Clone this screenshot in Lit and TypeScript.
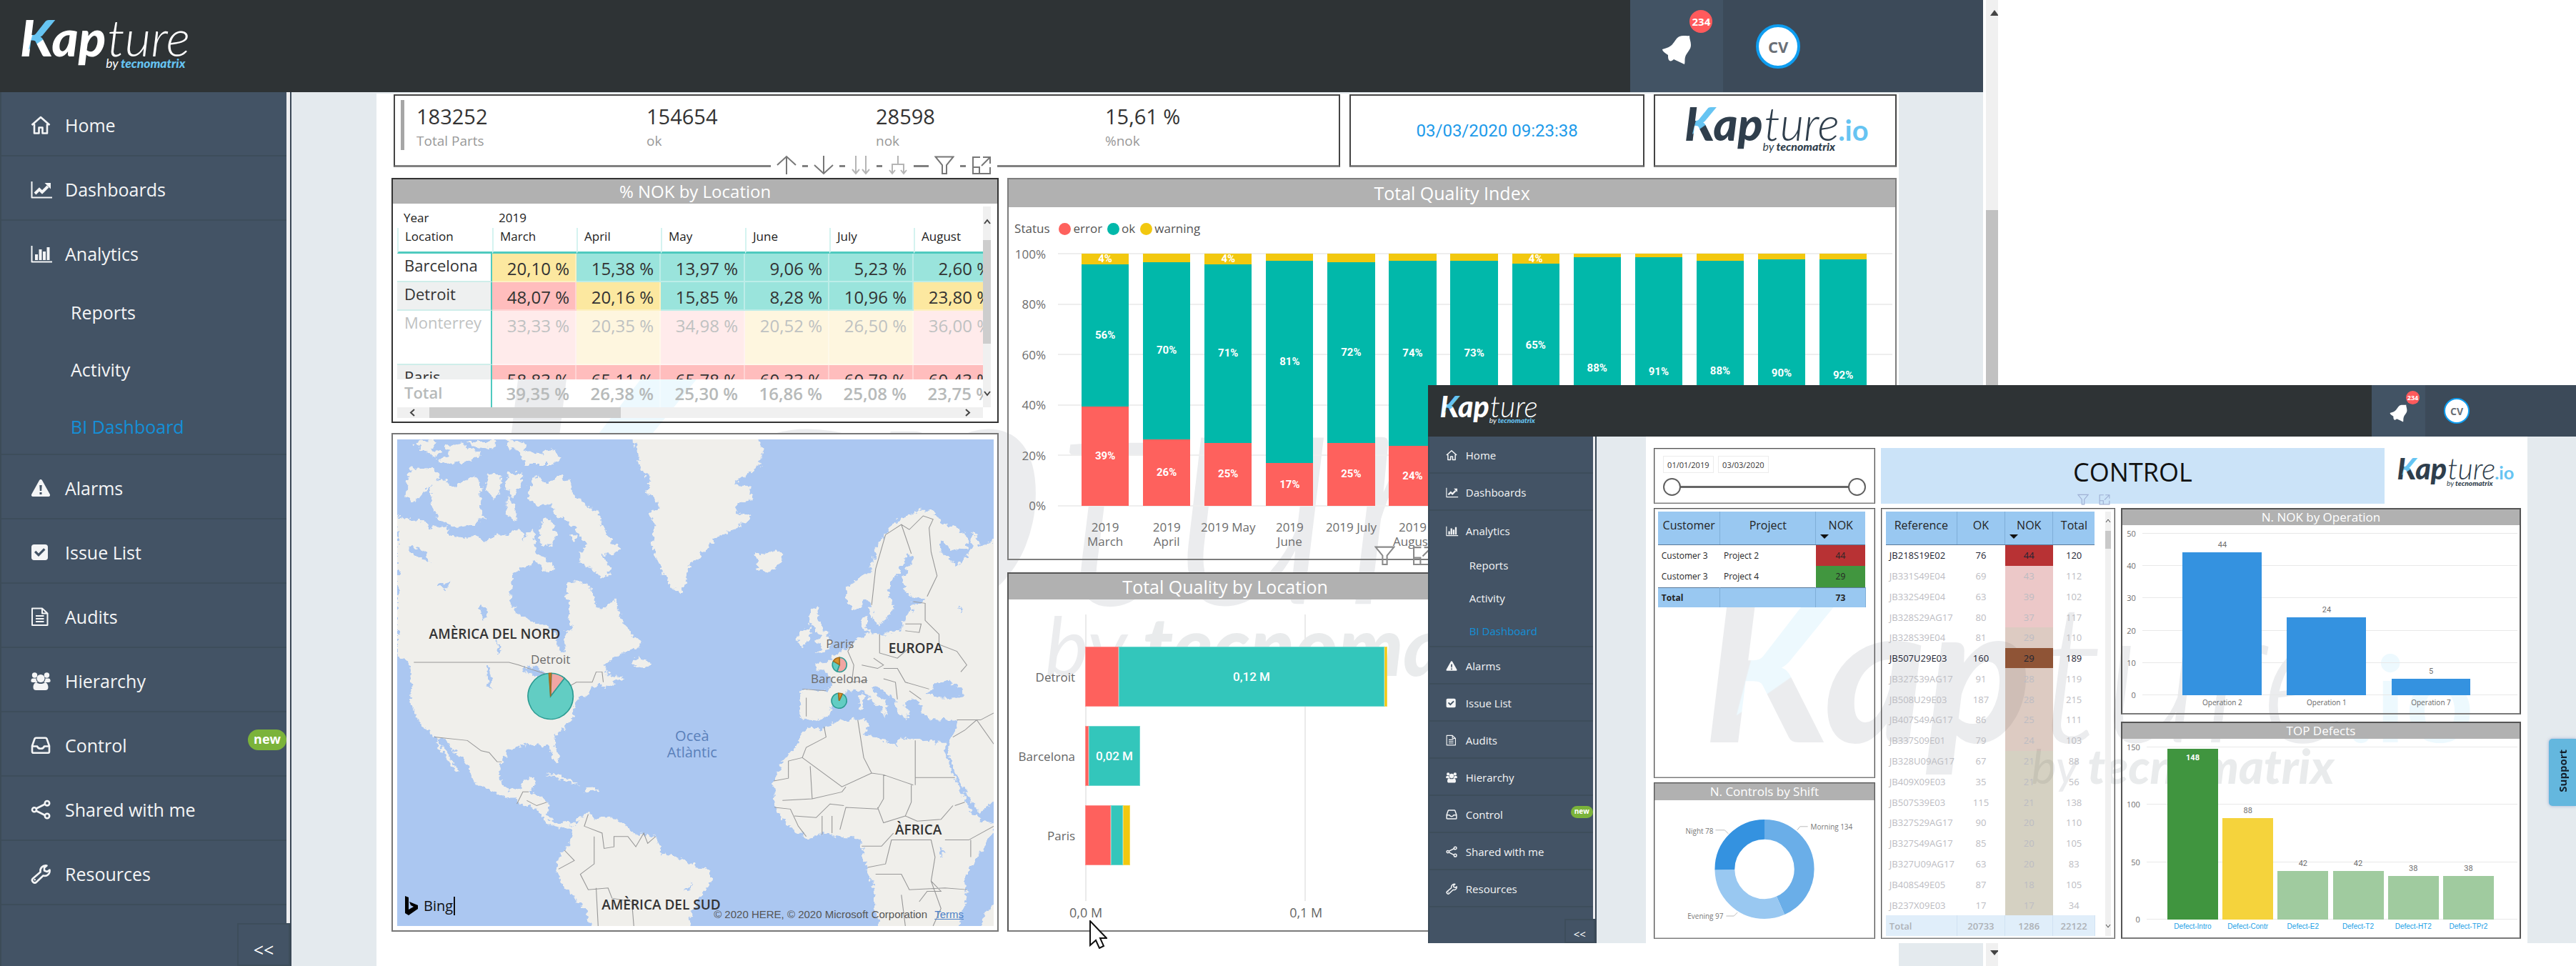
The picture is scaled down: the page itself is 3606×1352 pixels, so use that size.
import { LitElement, html, svg, css, nothing } from "lit";
import { customElement, property } from "lit/decorators.js";
import { classMap } from "lit/directives/class-map.js";

/* ---------- Shared pieces ---------- */

const panelStyles = css`
  .panel {
    display: flex;
    flex-direction: column;
    box-sizing: border-box;
    min-width: 0;
    border: 2px solid #555;
    border-bottom-color: #7a7a7a;
  }
  .title {
    margin: 0;
    background: #b1b1b1;
    color: #fff;
    font-weight: 400;
    text-align: center;
  }
`;

const funnel = svg`<path d="M1.5 2.5h25L17 14v12h-6V14z" />`;
const focus = svg`<path d="M12 3H2v23h24v-9M2 17h9v9M16 3h10v9M14 15 26 3" />`;

const icons: Record<string, unknown> = {
  home: svg`<path class="s" d="M1.5 14 14 3l12.500 11M5 12.500V25.500h6.500v-8h5v8H23V12.500" />`,
  line: svg`<path class="t" d="M1.500 3v22.500H30" /><path class="b" d="m6 20 6-6 4 4 8-8" /><path d="M19.500 5H28v8.500z" />`,
  bars: svg`<path class="t" d="M1.500 3v22.500H30" /><path d="M6 15h4v8H6zM11.500 8h4v15h-4zM17 11h4v12h-4zM22.500 5h4v18h-4z" />`,
  alarm: svg`<path fill-rule="evenodd" d="M14 2c1 0 1.600.6 2 1.300l10.800 19.500c.8 1.500-.1 3.200-1.800 3.200H3c-1.700 0-2.600-1.700-1.800-3.200L12 3.300C12.400 2.600 13 2 14 2zm-1.700 8 .5 8h2.400l.5-8zm.2 10v3h3v-3z" />`,
  check: svg`<path fill-rule="evenodd" d="M4.500 3h16c2 0 3.500 1.500 3.500 3.500v15c0 2-1.500 3.500-3.500 3.500h-16C2.500 25 1 23.500 1 21.500v-15C1 4.500 2.500 3 4.500 3zM5 14l6 6 9.500-9.500-2.300-2.300L11 15.400l-3.700-3.700z" />`,
  file: svg`<path class="t" d="M2 2.500h14l7.500 7V26H2zM16 2.500v7h7.500M7 13h11.500M7 17h11.500M7 21h11.500" />`,
  users: svg`<circle cx="14" cy="10.500" r="5.500" /><circle cx="5.500" cy="6" r="3.700" /><circle cx="22.500" cy="6" r="3.700" /><path d="M3 10.500h4.500c0 2.500 1 4.200 2.500 5.500H3c-2 0-3-1-2.600-2.800.4-2 1.300-2.700 2.600-2.700zM25 10.500h-4.500c0 2.500-1 4.200-2.500 5.500h7c2 0 3-1 2.600-2.800-.4-2-1.300-2.700-2.600-2.700zM8 16c1.500 1.500 3.500 2 6 2s4.500-.5 6-2c3 .5 4.500 3.500 4.500 7 0 2.500-1.500 4-4 4h-13c-2.500 0-4-1.500-4-4 0-3.500 1.500-6.500 4.500-7z" />`,
  inbox: svg`<path class="s" d="M2 15 5.500 5c.3-.8 1-1.300 1.800-1.300h13.400c.8 0 1.500.5 1.800 1.300L26 15v8c0 1-.7 1.700-1.700 1.700H3.700C2.700 24.700 2 24 2 23zM2 15.500h7c.8 2.300 2.500 3.300 5 3.300s4.200-1 5-3.300h7" />`,
  share: svg`<path class="s" d="M8 12.500 20 6.500M8 16l12 6" /><circle class="s" cx="5" cy="14.200" r="3" /><circle class="s" cx="23" cy="5.200" r="3.200" /><circle class="s" cx="23" cy="23" r="3.200" />`,
  wrench: svg`<path class="s" d="M13.500 11.500C12.600 6.500 16.500 1.500 22.500 2.500l-3.500 3v4l4 1.500 3.500-2.500c1 5-3.500 9.500-9 8L8 25.500c-3 3-8-1.500-5.200-4.800z" /><circle cx="5.800" cy="22.300" r="1.200" />`,
};

/* ---------- Brand logo ---------- */

@customElement("kap-logo")
export class KapLogo extends LitElement {
  @property({ type: Boolean }) io = false;

  static styles = css`
    :host {
      display: block;
      --main: #2f3e4c;
      --sky: #66c4f2;
      --tag: #2f3e4c;
    }
    :host([tone="light"]) {
      --main: #fff;
      --tag: #66c4f2;
    }
    :host([tone="ghost"]) {
      --main: #ebecee;
      --sky: #edf9fe;
      --tag: #e9ebec;
    }
    svg {
      display: block;
      width: 100%;
      height: auto;
      overflow: visible;
    }
    text {
      font-family: Lato, "Open Sans", sans-serif;
      font-style: italic;
      fill: var(--main);
    }
    .heavy {
      font-size: 65px;
      font-weight: 900;
      fill: url(#ink);
    }
    .thin {
      font-size: 65px;
      font-weight: 300;
    }
    .base {
      fill: var(--main);
    }
    .arm {
      fill: var(--sky);
    }
    .io {
      fill: var(--sky);
      font-size: 40px;
      font-weight: 700;
      font-style: normal;
    }
    .by {
      font-size: 16px;
      font-weight: 400;
    }
    .tag {
      font-size: 16px;
      font-weight: 900;
      fill: var(--tag);
    }
  `;

  render() {
    return html`<svg viewBox="0 0 ${this.io ? 254 : 214} 66" role="img" aria-label="Kapture by tecnomatrix">
      <pattern id="ink" patternUnits="userSpaceOnUse" x="-20" y="-20" width="280" height="120">
        <rect class="base" width="280" height="120" />
        <path class="arm" d="M41 16H80V28L63 32 50 44 30 58Z" />
      </pattern>
      <text class="heavy" x="-1" y="47">Kap</text>
      <text class="thin" x="111" y="47">ture</text>
      <text class="by" x="109" y="61">by</text>
      <text class="tag" x="128" y="61">tecnomatrix</text>
      ${this.io ? svg`<text class="io" x="215" y="47">.io</text>` : nothing}
    </svg>`;
  }
}

/* ---------- Application window: header, side menu, content ---------- */

const MENU = [
  { icon: "home", label: "Home" },
  { icon: "line", label: "Dashboards" },
  { icon: "bars", label: "Analytics", sub: ["Reports", "Activity", "BI Dashboard"] },
  { icon: "alarm", label: "Alarms" },
  { icon: "check", label: "Issue List" },
  { icon: "file", label: "Audits" },
  { icon: "users", label: "Hierarchy" },
  { icon: "inbox", label: "Control", badge: "new" },
  { icon: "share", label: "Shared with me" },
  { icon: "wrench", label: "Resources" },
];

@customElement("kap-window")
export class KapWindow extends LitElement {
  static styles = css`
    :host {
      display: flex;
      flex-direction: column;
      min-width: 0;
      font-family: "Open Sans", "Noto Sans", sans-serif;
      --head: 129px;
      --logo: 234px;
      --logo-x: 29px;
      --side: 408px;
      --rail: 5px;
      --row: 90px;
      --open-row: 88px;
      --sub: 80px;
      --drop: 4px;
      --font: 25px;
      --pad: 43px;
      --icon: 28px;
      --gap: 20px;
      --sub-pad: 99px;
      --foot: 60px;
      --foot-w: 74px;
      --bell: 130px;
      --bell-icon: 42px;
      --user: 364px;
      --user-pad: 46px;
      --avatar: 62px;
      --ring: 4px;
      --avatar-font: 22px;
      --count: 32px;
      --count-font: 15px;
      --new-w: 54px;
      --new-h: 29px;
      --new-font: 18px;
    }
    :host([compact]) {
      --head: 72px;
      --logo: 135px;
      --logo-x: 17px;
      --side: 236px;
      --rail: 3px;
      --row: 52px;
      --open-row: 53px;
      --sub: 46px;
      --drop: 2px;
      --font: 15px;
      --pad: 25px;
      --icon: 16px;
      --gap: 12px;
      --sub-pad: 58px;
      --foot: 34px;
      --foot-w: 43px;
      --bell: 75px;
      --bell-icon: 25px;
      --user: 211px;
      --user-pad: 26px;
      --avatar: 36px;
      --ring: 2px;
      --avatar-font: 14px;
      --count: 19px;
      --count-font: 9px;
      --new-w: 31px;
      --new-h: 17px;
      --new-font: 10px;
    }
    header {
      display: flex;
      height: var(--head);
      background: #2e3335;
    }
    .brand {
      flex: 1;
      display: flex;
      align-items: center;
      padding-left: var(--logo-x);
    }
    .brand kap-logo {
      width: var(--logo);
    }
    button {
      border: 0;
      padding: 0;
      font: inherit;
      cursor: pointer;
    }
    .bell {
      position: relative;
      width: var(--bell);
      background: #425364;
    }
    .bell svg {
      display: block;
      width: var(--bell-icon);
      margin: 8% auto 0;
      fill: #fff;
    }
    .count {
      position: absolute;
      left: 64%;
      top: 11%;
      width: var(--count);
      height: var(--count);
      line-height: var(--count);
      border-radius: 50%;
      background: #ff5a5c;
      color: #fff;
      font-size: var(--count-font);
      font-weight: 700;
      text-align: center;
    }
    .user {
      display: flex;
      align-items: center;
      box-sizing: border-box;
      width: var(--user);
      padding-left: var(--user-pad);
      background: #3c4a59;
    }
    .avatar {
      display: grid;
      place-items: center;
      box-sizing: border-box;
      width: var(--avatar);
      height: var(--avatar);
      border: var(--ring) solid #0e9df0;
      border-radius: 50%;
      background: #fff;
      color: #6a6f76;
      font-size: var(--avatar-font);
      font-weight: 700;
    }
    .body {
      flex: 1;
      display: flex;
      min-height: 0;
    }
    aside {
      display: flex;
      flex-direction: column;
      box-sizing: border-box;
      width: var(--side);
      flex: none;
      background: #435365;
      border-left: 2px solid #3c4b58;
      border-right: 2px solid #3a4856;
    }
    nav {
      flex: 1;
      border-right: var(--rail) solid #eeeef0;
    }
    ul {
      list-style: none;
      margin: 0;
      padding: 0;
    }
    .item {
      box-sizing: border-box;
      border-bottom: 2px solid #3d4d5b;
    }
    .link {
      display: flex;
      align-items: center;
      box-sizing: border-box;
      height: calc(var(--row) - 2px);
      padding: var(--drop) 0 0 calc(var(--pad) - 2px);
      gap: var(--gap);
      color: #f4f5f6;
      font-size: var(--font);
      text-decoration: none;
      white-space: nowrap;
    }
    .open > .link {
      height: var(--open-row);
    }
    .sub {
      margin-bottom: -2px;
    }
    .sub .link {
      height: var(--sub);
      padding-left: calc(var(--sub-pad) - 2px);
      padding-top: 0;
    }
    .sub .current {
      color: #1490d8;
    }
    .link svg {
      width: var(--icon);
      height: var(--icon);
      flex: none;
      overflow: visible;
      fill: #f4f5f6;
    }
    .s,
    .t,
    .b {
      fill: none;
      stroke: #f4f5f6;
      stroke-width: 2.600px;
      stroke-linejoin: round;
    }
    .t {
      stroke-width: 2px;
    }
    .b {
      stroke-width: 4px;
      stroke-linejoin: miter;
    }
    .new {
      align-self: flex-start;
      margin: calc(var(--new-h) * 0.7) 0 0 auto;
      width: var(--new-w);
      height: var(--new-h);
      line-height: calc(var(--new-h) - 2px);
      border-radius: 15px;
      background: #7bb33a;
      color: #fff;
      font-size: var(--new-font);
      font-weight: 700;
      text-align: center;
    }
    .collapse {
      align-self: flex-end;
      box-sizing: border-box;
      width: var(--foot-w);
      height: var(--foot);
      padding-top: calc(var(--foot) / 4);
      border: 2px solid #3d4d5b;
      background: #435365;
      color: #fff;
      font-size: var(--font);
      line-height: 1;
    }
    main {
      flex: 1;
      min-width: 0;
      display: flex;
      background: #e4eaee;
    }
  `;

  render() {
    return html`
      <header>
        <div class="brand"><kap-logo tone="light"></kap-logo></div>
        <button class="bell" aria-label="Notifications">
          <svg viewBox="0 0 42 42"><path d="M39 1c-4 1-9-1-14 1-5 2-7 9-12 13-4 3-9 4-12 5 0 3 4 5 8 8 0 4 0 6 2 8 2 1 4 0 6-2 5 2 10 5 15 7 1-3 0-7 1-10 2-7 8-10 8-17 0-5-2-8-2-13z" /></svg>
          <span class="count">234</span>
        </button>
        <div class="user"><button class="avatar">CV</button></div>
      </header>
      <div class="body">
        <aside>
          <nav>
            <ul>
              ${MENU.map(
                (m) => html`<li class=${classMap({ item: true, open: !!m.sub })}>
                  <a class="link" href="#">
                    <svg viewBox="0 0 28 28" aria-hidden="true">${icons[m.icon]}</svg>${m.label}
                    ${m.badge ? html`<span class="new">${m.badge}</span>` : nothing}
                  </a>
                  ${m.sub
                    ? html`<ul class="sub">
                        ${m.sub.map(
                          (s, i) => html`<li><a class=${classMap({ link: true, current: i === 2 })} href="#">${s}</a></li>`,
                        )}
                      </ul>`
                    : nothing}
                </li>`,
              )}
            </ul>
          </nav>
          <button class="collapse" aria-label="Collapse menu">&lt;&lt;</button>
        </aside>
        <main><slot></slot></main>
      </div>
    `;
  }
}

/* ---------- % NOK by Location ---------- */

const MONTHS = ["March", "April", "May", "June", "July", "August"];
type Tone = "r" | "y" | "g";
const LOCATIONS: { name: string; cls: string; tones: Tone[]; vals: string[] }[] = [
  { name: "Barcelona", cls: "", tones: ["y", "g", "g", "g", "g", "g"], vals: ["20,10 %", "15,38 %", "13,97 %", "9,06 %", "5,23 %", "2,60 %"] },
  { name: "Detroit", cls: "alt", tones: ["r", "y", "g", "g", "g", "y"], vals: ["48,07 %", "20,16 %", "15,85 %", "8,28 %", "10,96 %", "23,80 %"] },
  { name: "Monterrey", cls: "faded tall", tones: ["r", "y", "r", "y", "y", "r"], vals: ["33,33 %", "20,35 %", "34,98 %", "20,52 %", "26,50 %", "36,00 %"] },
  { name: "Paris", cls: "alt cut", tones: ["r", "r", "r", "r", "r", "r"], vals: ["58,83 %", "65,11 %", "65,78 %", "60,33 %", "60,78 %", "60,43 %"] },
];
const TOTALS = ["39,35 %", "26,38 %", "25,30 %", "16,86 %", "25,08 %", "23,75 %"];

@customElement("location-table")
export class LocationTable extends LitElement {
  static styles = [
    panelStyles,
    css`
      :host {
        display: block;
      }
      .panel {
        height: 343px;
        border-color: #333;
      }
      .title {
        height: 34px;
        font-size: 24px;
        line-height: 34px;
      }
      .area {
        display: grid;
        grid-template-columns: minmax(0, 1fr) 11px;
        padding: 4px 9px 0 6px;
      }
      .clip {
        overflow: hidden;
      }
      table {
        table-layout: fixed;
        width: 841px;
        border-collapse: separate;
        border-spacing: 0;
        color: #333;
      }
      .first {
        width: 133px;
      }
      th,
      td {
        box-sizing: border-box;
        padding: 0;
        font-weight: 400;
      }
      thead th {
        font-size: 17px;
        text-align: left;
        padding-left: 9px;
        height: 30px;
        color: #222;
      }
      thead .months th {
        height: 36px;
        padding-bottom: 10px;
        border-left: 2px solid #d4f3f0;
        border-bottom: 3px solid #4fcabf;
      }
      tbody th {
        text-align: left;
        vertical-align: top;
        padding: 1px 0 0 10px;
        font-size: 22px;
        line-height: 30px;
        border-right: 2px solid #4fcabf;
        border-bottom: 2px solid #cfeeea;
      }
      tbody td {
        height: 40px;
        text-align: right;
        vertical-align: top;
        padding: 5px 8px 0 0;
        font-size: 24px;
        line-height: 32px;
        border-right: 2px solid rgba(255, 255, 255, 0.35);
        border-bottom: 2px solid rgba(255, 255, 255, 0.35);
      }
      .alt th {
        background: #eef0f0;
      }
      .g {
        background: #9ae4dc;
      }
      .y {
        background: #fce8a0;
      }
      .r {
        background: #ffbdbd;
      }
      .tall td {
        height: 76px;
      }
      .faded {
        color: #bfc2c2;
      }
      .faded .y {
        background: #fef6df;
      }
      .faded .r {
        background: #ffebeb;
      }
      .cut th,
      .cut td {
        height: 20px;
        border-bottom: 0;
      }
      .snip {
        height: 15px;
        overflow: hidden;
      }
      .cut th .snip {
        height: 18px;
      }
      .total th,
      .total td {
        height: 39px;
        color: #b7baba;
        border-bottom: 0;
        line-height: 34px;
      }
      .total td {
        font-weight: 600;
        padding-top: 3px;
      }
      .total th {
        font-weight: 600;
      }
      .vbar,
      .hbar {
        display: flex;
        background: #f0f0f0;
      }
      .vbar {
        flex-direction: column;
        align-items: center;
      }
      svg {
        width: 11px;
        height: 11px;
        fill: none;
        stroke: #444;
        stroke-width: 2px;
        flex: none;
      }
      .vbar svg {
        margin: 16px 0 20px;
      }
      .vthumb {
        width: 11px;
        flex: 1;
        background: #cdcdcd;
      }
      .vbar .down {
        margin: 64px 0 14px;
      }
      .hbar {
        align-items: center;
        justify-content: space-between;
        height: 15px;
        padding: 0 16px;
      }
      .hthumb {
        width: 34%;
        height: 15px;
        margin-right: auto;
        margin-left: 18px;
        background: #cdcdcd;
      }
    `,
  ];

  render() {
    return html`<section class="panel">
      <h2 class="title">% NOK by Location</h2>
      <div class="area">
        <div class="clip">
          <table>
            <colgroup>
              <col class="first" />
              ${MONTHS.map(() => html`<col />`)}
            </colgroup>
            <thead>
              <tr>
                <th>Year</th>
                <th colspan="6">2019</th>
              </tr>
              <tr class="months">
                <th>Location</th>
                ${MONTHS.map((m) => html`<th>${m}</th>`)}
              </tr>
            </thead>
            <tbody>
              ${LOCATIONS.map((l) => {
                const cell = classMap({ snip: l.cls.includes("cut") });
                return html`<tr class=${l.cls}>
                  <th><div class=${cell}>${l.name}</div></th>
                  ${l.vals.map((v, i) => html`<td class=${l.tones[i]}><div class=${cell}>${v}</div></td>`)}
                </tr>`;
              })}
              <tr class="total">
                <th>Total</th>
                ${TOTALS.map((v) => html`<td>${v}</td>`)}
              </tr>
            </tbody>
          </table>
        </div>
        <div class="vbar">
          <svg viewBox="0 0 11 11"><path d="m2 8 4-5 4 5" /></svg>
          <div class="vthumb"></div>
          <svg class="down" viewBox="0 0 11 11"><path d="m2 3 4 5 4-5" /></svg>
        </div>
        <div class="hbar">
          <svg viewBox="0 0 11 11"><path d="M8 1 3 5.500 8 10" /></svg>
          <div class="hthumb"></div>
          <svg viewBox="0 0 11 11"><path d="m3 1 5 4.500L3 10" /></svg>
        </div>
      </div>
    </section>`;
  }
}

/* ---------- Total Quality Index ---------- */

const QUALITY: { cat: string[]; err: number; ok: number; warn: number; okT: string; errT: string; warnT?: string }[] = [
  { cat: ["2019", "March"], err: 39.3, ok: 56.5, warn: 4.2, errT: "39%", okT: "56%", warnT: "4%" },
  { cat: ["2019", "April"], err: 26.3, ok: 70.4, warn: 3.3, errT: "26%", okT: "70%" },
  { cat: ["2019 May"], err: 25, ok: 70.8, warn: 4.2, errT: "25%", okT: "71%", warnT: "4%" },
  { cat: ["2019", "June"], err: 17, ok: 80.2, warn: 2.8, errT: "17%", okT: "81%" },
  { cat: ["2019 July"], err: 25, ok: 71.7, warn: 3.3, errT: "25%", okT: "72%" },
  { cat: ["2019", "August"], err: 23.7, ok: 73.5, warn: 2.8, errT: "24%", okT: "74%" },
  { cat: [], err: 24, ok: 73.1, warn: 2.9, errT: "", okT: "73%" },
  { cat: [], err: 31, ok: 65, warn: 4, errT: "", okT: "65%", warnT: "4%" },
  { cat: [], err: 10.5, ok: 88, warn: 1.5, errT: "", okT: "88%" },
  { cat: [], err: 7.5, ok: 91, warn: 1.5, errT: "", okT: "91%" },
  { cat: [], err: 9.3, ok: 88, warn: 2.7, errT: "", okT: "88%" },
  { cat: [], err: 7.6, ok: 90, warn: 2.4, errT: "", okT: "90%" },
  { cat: [], err: 5.8, ok: 92, warn: 2.2, errT: "", okT: "92%" },
];

@customElement("quality-index")
export class QualityIndex extends LitElement {
  static styles = [
    panelStyles,
    css`
      :host {
        display: block;
      }
      .panel {
        position: relative;
        height: 535px;
        border-color: #7d7d7d;
        color: #6d6d6d;
        font-size: 17px;
      }
      .title {
        font-size: 25px;
        line-height: 39px;
      }
      .legend {
        display: flex;
        align-items: center;
        gap: 7px;
        margin: 18px 0 0 8px;
        line-height: 24px;
        color: #555;
      }
      .key {
        display: flex;
        align-items: center;
        gap: 3px;
      }
      .key:first-of-type {
        margin-left: 6px;
      }
      .dot {
        width: 17px;
        height: 17px;
        border-radius: 50%;
      }
      .err {
        background: #fe615d;
      }
      .ok {
        background: #01b8aa;
      }
      .warn {
        background: #f2c80f;
      }
      .plot {
        display: grid;
        height: 353px;
        margin: 23px 4px 0 4px;
      }
      .scale,
      .bars {
        grid-area: 1 / 1;
      }
      .scale {
        display: flex;
        flex-direction: column;
        justify-content: space-between;
      }
      .tick {
        display: flex;
        align-items: center;
        gap: 17px;
        height: 0;
      }
      .tick span {
        width: 48px;
        text-align: right;
      }
      .tick i {
        flex: 1;
        height: 2px;
        background: #eee;
      }
      .bars,
      .cats {
        display: grid;
        grid-template-columns: repeat(13, minmax(0, 1fr));
        padding: 0 26px 0 88px;
      }
      .bars {
        min-height: 0;
      }
      .bar {
        display: flex;
        flex-direction: column;
        width: 77%;
        margin: 0 auto;
        height: 353px;
      }
      .seg {
        display: grid;
        place-items: center;
        min-height: 0;
        overflow: hidden;
        color: #fff;
        font-family: Roboto, sans-serif;
        font-size: 15px;
        font-weight: 700;
        line-height: 15px;
      }
      .cats {
        margin: 20px 4px 0;
        text-align: center;
        line-height: 20px;
      }
      .cats div {
        display: flex;
        flex-direction: column;
        align-items: center;
        white-space: nowrap;
      }
      .tools {
        position: absolute;
        left: 512px;
        bottom: -10px;
        display: flex;
        gap: 24px;
      }
      .tools svg {
        width: 29px;
        height: 29px;
        fill: none;
        stroke: #8a8a8a;
        stroke-width: 2px;
      }
    `,
  ];

  render() {
    return html`<section class="panel">
      <h2 class="title">Total Quality Index</h2>
      <div class="legend">
        Status
        <span class="key"><i class="dot err"></i>error</span>
        <span class="key"><i class="dot ok"></i>ok</span>
        <span class="key"><i class="dot warn"></i>warning</span>
      </div>
      <div class="plot">
        <div class="scale">
          ${[100, 80, 60, 40, 20, 0].map((t) => html`<div class="tick"><span>${t}%</span><i></i></div>`)}
        </div>
        <div class="bars">
          ${QUALITY.map(
            (q) => html`<div class="bar">
              <div class="seg warn" style="flex:${q.warn}">${q.warnT ?? nothing}</div>
              <div class="seg ok" style="flex:${q.ok}">${q.okT}</div>
              <div class="seg err" style="flex:${q.err}">${q.errT}</div>
            </div>`,
          )}
        </div>
      </div>
      <div class="cats">${QUALITY.map((q) => html`<div>${q.cat.map((c) => html`<span>${c}</span>`)}</div>`)}</div>
      <div class="tools">
        <svg viewBox="0 0 28 28">${funnel}</svg>
        <svg viewBox="0 0 28 28">${focus}</svg>
      </div>
    </section>`;
  }
}

/* ---------- Total Quality by Location ---------- */

@customElement("quality-location")
export class QualityLocation extends LitElement {
  static styles = [
    panelStyles,
    css`
      :host {
        display: block;
      }
      .panel {
        height: 503px;
        color: #666;
        font-size: 17px;
      }
      .title {
        font-size: 25px;
        line-height: 36px;
      }
      .plot {
        display: grid;
        grid-template-columns: 94px 307px 1fr;
        height: 401px;
        margin-top: 21px;
      }
      .lines {
        grid-area: 1 / 2 / 2 / 3;
        border-left: 2px solid #eaeaea;
        border-right: 2px solid #eaeaea;
        margin-left: 13px;
        margin-right: -15px;
      }
      .rows {
        grid-area: 1 / 1 / 2 / 4;
        display: flex;
        flex-direction: column;
        gap: 27px;
        padding-top: 45px;
      }
      .row {
        display: flex;
        align-items: center;
        height: 84px;
      }
      .name {
        width: 93px;
        margin-right: 14px;
        text-align: right;
      }
      .seg {
        display: grid;
        place-items: center;
        height: 100%;
        box-sizing: border-box;
        border: 1px solid rgba(255, 255, 255, 0.3);
        color: #fff;
        font-family: Roboto, sans-serif;
        font-weight: 500;
      }
      .err {
        background: #fe615d;
      }
      .ok {
        background: #33c6bb;
      }
      .warn {
        background: #f2c80f;
      }
      .axis {
        display: flex;
        gap: 262px;
        padding: 6px 0 0 85px;
        line-height: 20px;
        font-size: 18px;
      }
    `,
  ];

  render() {
    const rows: [string, number, number, number, string][] = [
      ["Detroit", 47, 372, 4, "0,12 M"],
      ["Barcelona", 5, 72, 0, "0,02 M"],
      ["Paris", 36, 17, 10, ""],
    ];
    return html`<section class="panel">
      <h2 class="title">Total Quality by Location</h2>
      <div class="plot">
        <div class="lines"></div>
        <div class="rows">
          ${rows.map(
            ([name, e, o, w, t]) => html`<div class="row">
              <span class="name">${name}</span>
              <div class="seg err" style="width:${e}px"></div>
              <div class="seg ok" style="width:${o}px">${t}</div>
              ${w ? html`<div class="seg warn" style="width:${w}px"></div>` : nothing}
            </div>`,
          )}
        </div>
      </div>
      <div class="axis"><span>0,0 M</span><span>0,1 M</span></div>
    </section>`;
  }
}

/* ---------- Map ---------- */

const LAND = [
  "M28 255 60 265 100 272 110 290 150 285 160 310 200 320 230 312 250 330 280 310 310 310 330 290 350 310 345 330 370 290 375 335 378 360 400 375 425 410 410 420 390 400 370 385 355 405 340 410 320 430 315 470 312 505 330 540 370 560 410 580 430 600 435 640 445 655 455 640 450 600 470 580 460 545 465 520 455 490 455 450 480 445 510 460 525 490 530 520 545 530 560 515 575 500 590 540 600 570 620 600 642 620 640 640 610 650 570 670 550 690 555 705 560 720 600 725 570 745 550 755 540 745 515 765 500 780 480 790 470 830 470 850 450 870 425 900 428 930 438 965 432 982 420 960 410 930 390 920 350 925 310 935 295 965 285 1000 290 1040 310 1055 340 1045 350 1025 380 1022 370 1050 365 1065 400 1080 412 1095 405 1130 420 1150 450 1145 465 1150 470 1165 450 1165 420 1160 395 1140 380 1110 340 1095 330 1075 300 1075 250 1050 220 1030 205 980 170 940 150 910 122 900 80 850 60 790 65 720 60 690 28 655Z",
  "M125 900 150 940 185 1000 178 1003 150 960 130 920Z",
  "M465 1160 500 1125 515 1122 520 1140 570 1135 600 1150 625 1180 680 1190 700 1240 760 1265 815 1290 820 1320 790 1370 770 1420 760 1460 520 1460 500 1400 450 1340 430 1290 440 1240 465 1210 470 1180Z",
  "M530 20 620 20 635 70 640 110 665 150 655 190 680 200 690 230 660 245 680 280 670 340 690 400 710 450 740 485 755 450 765 400 800 360 830 320 900 280 925 255 885 245 880 225 925 205 920 170 880 160 900 140 940 110 950 60 940 20Z",
  "M365 145 385 140 400 160 420 150 440 135 460 150 470 190 500 220 540 250 545 290 570 330 592 350 570 370 545 365 560 400 565 425 545 440 520 410 490 390 490 360 510 350 490 310 460 270 430 255 410 220 385 230 360 200Z",
  "M110 160 140 145 170 170 200 150 225 140 240 170 235 220 250 260 220 280 180 290 150 280 125 250 115 210Z",
  "M60 118 120 115 135 140 100 180 75 215 50 200Z M70 38 125 36 115 60 140 70 120 85 90 60Z M150 50 190 45 240 75 215 95 180 100 150 105 130 90 160 80Z M200 36 280 36 270 60 230 55Z M300 32 340 36 350 60 380 75 425 60 440 85 420 105 350 105 330 60 310 60Z M260 130 290 135 290 175 275 210 250 170Z M310 130 345 130 340 165 320 200 300 170Z M305 200 320 215 330 270 305 250Z",
  "M395 260 420 270 430 310 415 345 395 340 385 300Z M465 310 480 305 478 330 465 325Z M395 380 425 410 400 420 390 400Z",
  "M622 690 635 660 645 675 668 683 660 698 640 692Z M405 1010 440 1010 490 1042 470 1038 430 1018Z M500 1048 530 1045 535 1055 505 1058Z",
  "M925 360 945 370 985 355 1003 375 985 405 960 420 935 410 940 385Z",
  "M1070 530 1095 515 1088 545 1105 590 1125 620 1120 645 1085 655 1100 640 1085 620 1095 600 1075 580 1065 550Z M1048 590 1070 580 1068 620 1045 640 1038 610Z",
  "M1045 765 1060 760 1110 765 1122 750 1115 715 1085 700 1085 685 1120 680 1125 665 1150 650 1180 620 1200 605 1215 595 1198 570 1200 550 1215 545 1212 580 1225 600 1260 600 1300 585 1310 550 1330 530 1325 515 1355 505 1360 495 1330 490 1310 480 1305 440 1320 400 1330 380 1320 365 1305 380 1300 405 1280 440 1265 480 1275 500 1280 530 1260 560 1240 575 1225 550 1222 515 1210 500 1195 530 1175 525 1165 500 1162 465 1190 440 1225 410 1235 350 1270 290 1300 260 1340 240 1380 240 1400 275 1440 290 1470 320 1465 350 1430 355 1400 325 1395 350 1420 380 1440 400 1475 360 1480 300 1500 345 1540 320 1540 1080 1500 1125 1470 1080 1440 1010 1418 945 1425 900 1440 850 1370 850 1350 830 1350 800 1330 790 1310 795 1305 810 1320 830 1310 852 1295 830 1285 800 1270 780 1250 760 1235 750 1225 755 1240 780 1270 805 1262 815 1258 845 1250 815 1225 795 1205 765 1185 760 1160 770 1145 780 1140 790 1125 810 1115 840 1085 852 1065 850 1045 845Z",
  "M1065 870 1095 880 1140 850 1190 848 1212 850 1215 880 1205 890 1240 905 1290 925 1300 900 1330 905 1390 915 1412 915 1408 940 1425 1000 1450 1050 1470 1110 1500 1145 1540 1155 1520 1200 1480 1270 1460 1310 1465 1370 1440 1460 1245 1460 1235 1400 1230 1330 1210 1270 1200 1230 1195 1195 1150 1195 1110 1180 1060 1195 1010 1155 980 1110 978 1030 1000 970 1040 920 1050 890Z",
  "M1540 1385 1510 1410 1500 1460 1540 1460Z M1195 780 1205 775 1205 815 1195 820Z",
];
const LAKES =
  "M345 700 380 695 410 715 395 725 360 715ZM400 725 415 760 405 775 398 750ZM255 690 268 700 265 755 258 750ZM50 345 95 350 110 385 80 380ZM125 460 165 445 150 470ZM240 515 255 530 245 560 238 540ZM275 610 290 650 282 660ZM1380 745 1420 735 1455 765 1450 785 1400 785 1365 775ZM1445 520 1455 525 1448 535ZM1395 1220 1410 1225 1400 1250ZM750 1345 775 1325 765 1345ZM1440 850 1420 860 1425 900 1435 880Z";
const BORDERS =
  "M70 682H310L335 690 360 700 400 715 M465 750 480 740 520 740 530 710 545 710 548 740 M122 900 205 910 240 940 260 945 280 972 292 972 M330 1095 345 1060 360 1060 M355 1085 380 1100 405 1090 M510 1125 500 1160 545 1180 550 1225 575 1220 575 1190 610 1190 630 1220 650 1180 660 1210 680 1190 M435 1285 475 1260 450 1230 M525 1190 525 1270 490 1300 510 1345 560 1340 570 1370 620 1380 625 1451 M530 1340 535 1451 M1225 515 1235 410 1260 310 1300 280 1325 365 M1300 280 1320 295 1355 255 1380 265 1370 290 1375 360 1390 430 1365 490 M1330 505 1360 510 1360 560 1395 600 1395 630 1440 650 1465 690 1450 710 M1310 570 1350 570 1345 595 1310 590 M1245 600 1245 655 1290 670 1320 640 M1230 670 1255 690 1240 700 1200 690 M1180 620 1165 650 1180 690 1175 740 1215 735 M1255 700 1290 700 1310 740 1370 760 M1255 730 1285 740 1290 790 M1110 765 1050 760 M1060 785 1060 840 M1320 765 1350 790 M1440 850 1500 850 1533 830 M1430 900 1460 880 1490 850 1533 920 M1105 870 1110 900 1060 930 1050 960 1150 1045 1225 1005 1205 960 1190 850 M1050 960 1015 970 1015 1020 978 1028 M1070 985 1075 1080 1000 1085 M1075 1080 1150 1060 1160 1045 M1225 1005 1255 1010 1330 1040 M1335 910 1335 1040 M1335 1018H1435 M1255 1010 1255 1080 1240 1110 1160 1105 1145 1170 M1325 1040 1325 1090 1310 1130 1340 1145 1400 1140 1430 1100 M980 1105 1020 1110 1040 1160 1060 1190 M1030 1130 1085 1135 1120 1095 1155 1100 M1100 1185 1100 1130 M1125 1180 1125 1130 M1240 1105 1255 1150 1310 1130 M1200 1218 1250 1218 1280 1180 M1215 1280 1260 1270 1275 1200 1375 1200 1385 1250 1375 1320 1400 1350 1365 1350 1345 1380 M1235 1300 1300 1300 1320 1345 1410 1340 1465 1345 M1300 1360 1310 1451 M1375 1320 1400 1400 1380 1451 M1475 1200 1475 1250 M1410 1200 1470 1200 1533 1160 M1435 1100 1460 1090";

const pie = (cx: number, cy: number, rx: number, ry: number, from: number, to: number) => {
  const p = (a: number) => {
    const r = (a * Math.PI) / 180;
    return `${(cx + rx * Math.sin(r)).toFixed(1)} ${(cy - ry * Math.cos(r)).toFixed(1)}`;
  };
  return `M${cx} ${cy}L${p(from)}A${rx} ${ry} 0 ${to - from > 180 ? 1 : 0} 1 ${p(to)}Z`;
};

@customElement("location-map")
export class LocationMap extends LitElement {
  static styles = [
    panelStyles,
    css`
      :host {
        display: block;
      }
      .panel {
        height: 698px;
        padding: 7px 5px 6px 6px;
        border-color: #777;
        background: #fff;
      }
      .map {
        position: relative;
        flex: 1;
        overflow: hidden;
        background: #abc7f1;
      }
      svg.geo {
        position: absolute;
        inset: 0;
        width: 100%;
        height: 100%;
      }
      .land {
        fill: #f0efeb;
      }
      .lake {
        fill: #abc7f1;
      }
      .border {
        fill: none;
        stroke: #989898;
        stroke-width: 2px;
      }
      .slice {
        stroke: #2c9b92;
        stroke-width: 3px;
        fill: #62cdc3;
      }
      .red {
        fill: #f1a6a3;
      }
      .gold {
        fill: #d9932b;
        stroke: #a56a1c;
      }
      .label {
        position: absolute;
        transform: translate(-50%, -50%);
        color: #6b6b6b;
        font-size: 17px;
        line-height: 23px;
        text-align: center;
        white-space: nowrap;
      }
      .region {
        color: #333;
        font-size: 19px;
        font-weight: 600;
      }
      .sea {
        color: #5a80ba;
        font-size: 20px;
      }
      .bing {
        position: absolute;
        left: 10px;
        bottom: 14px;
        display: flex;
        align-items: center;
        gap: 7px;
        color: #111;
        font-size: 20px;
        line-height: 26px;
      }
      .bing svg {
        width: 20px;
        height: 28px;
      }
      .bing i {
        width: 2px;
        height: 26px;
        margin-left: -6px;
        background: #111;
      }
      .credit {
        position: absolute;
        right: 42px;
        bottom: 7px;
        color: #555;
        font: 15px/18px "Liberation Sans", Arial, sans-serif;
      }
      .credit a {
        margin-left: 6px;
        color: #4b80c8;
      }
    `,
  ];

  render() {
    const at = (x: number, y: number) => `left:${(((x - 28) / 1505) * 100).toFixed(2)}%;top:${(((y - 32) / 1419) * 100).toFixed(2)}%`;
    const labels: [string, number, number, string][] = [
      ["AMÈRICA DEL NORD", 274, 598, "region"],
      ["Detroit", 415, 671, ""],
      ["Paris", 1145, 625, ""],
      ["Barcelona", 1143, 728, ""],
      ["EUROPA", 1336, 641, "region"],
      ["ÀFRICA", 1343, 1170, "region"],
      ["AMÈRICA DEL SUD", 694, 1389, "region"],
    ];
    return html`<section class="panel" aria-label="Map of locations">
      <div class="map">
        <svg class="geo" viewBox="28 32 1505 1419" preserveAspectRatio="none" aria-hidden="true">
          <filter id="coast" x="0" y="0" width="100%" height="100%">
            <feTurbulence type="fractalNoise" baseFrequency="0.07" numOctaves="3" seed="4" />
            <feDisplacementMap in="SourceGraphic" scale="24" xChannelSelector="R" yChannelSelector="G" />
          </filter>
          <g filter="url(#coast)">
            ${LAND.map((d) => svg`<path class="land" d=${d} />`)}
            <path class="lake" d=${LAKES} />
          </g>
          <path class="border" d=${BORDERS} />
          <path class="slice" d=${pie(415, 781, 57, 67, 38, 357)} />
          <path class="slice red" d=${pie(415, 781, 57, 67, 2, 38)} />
          <path class="slice gold" d=${pie(415, 781, 57, 67, 356, 361)} />
          <path class="slice red" d=${pie(1144, 689, 18, 21, 0, 200)} />
          <path class="slice" d=${pie(1144, 689, 18, 21, 200, 300)} />
          <path class="slice gold" d=${pie(1144, 689, 18, 21, 300, 359)} />
          <path class="slice" d=${pie(1143, 794, 19, 22, 25, 355)} />
          <path class="slice gold" d=${pie(1143, 794, 19, 22, 355, 385)} />
        </svg>
        ${labels.map(([t, x, y, c]) => html`<span class="label ${c}" style=${at(x, y)}>${t}</span>`)}
        <span class="label sea" style=${at(772, 919)}>Oceà<br />Atlàntic</span>
        <span class="bing"><svg viewBox="0 0 20 28"><path d="M1 0 6 2V19L13 15 9 13 7 8 19 13V18L6 27 1 24Z" /></svg>Bing<i></i></span>
        <span class="credit">© 2020 HERE, © 2020 Microsoft Corporation <a href="#">Terms</a></span>
      </div>
    </section>`;
  }
}

/* ---------- Quality page ---------- */

@customElement("quality-page")
export class QualityPage extends LitElement {
  static styles = css`
    :host {
      flex: 1;
      min-width: 0;
      position: relative;
      isolation: isolate;
      display: block;
      margin: 2px 118px 0 119px;
      padding: 1px 3px 0 21px;
      background: #fff;
      font-family: "Open Sans", "Noto Sans", sans-serif;
    }
    .mark {
      position: absolute;
      z-index: -1;
      left: 7.1%;
      top: 376px;
      width: 85.8%;
    }
    .kpis {
      display: grid;
      grid-template-columns: 1325fr 413fr 340fr;
      gap: 13px;
      margin-left: 3px;
      height: 102px;
    }
    .box {
      position: relative;
      box-sizing: border-box;
      border: 2px solid #444;
      border-bottom: 3px solid #808080;
      background: #fff;
    }
    .numbers {
      display: grid;
      grid-template-columns: repeat(4, minmax(0, 321px));
      margin: 0;
      padding: 6px 8px;
    }
    .numbers div {
      display: flex;
      flex-direction: column-reverse;
      justify-content: flex-end;
      padding-left: 23px;
    }
    .numbers div:first-child {
      height: 70px;
      padding-left: 17px;
      border-left: 5px solid #a6a6a6;
    }
    dd {
      margin: 0;
      color: #333;
      font-size: 29px;
      line-height: 46px;
    }
    dt {
      color: #999;
      font-size: 19px;
      line-height: 22px;
    }
    .tools {
      position: absolute;
      left: 526px;
      bottom: -14px;
      display: flex;
      gap: 8px;
    }
    .tools button {
      display: grid;
      padding: 0 8px;
      border: 0;
      background: #fff;
    }
    .tools button:nth-child(5) {
      margin-left: 13px;
    }
    .tools svg {
      width: 28px;
      height: 28px;
      fill: none;
      stroke: #777;
      stroke-width: 2px;
    }
    .tools .dim svg {
      stroke: #b5b5b5;
    }
    .date {
      display: grid;
      place-items: center;
      color: #1e9bea;
      font-family: Roboto, sans-serif;
      font-size: 24px;
    }
    .logo {
      display: grid;
      place-items: center;
    }
    .logo kap-logo {
      width: 253px;
    }
    .panels {
      display: grid;
      grid-template-columns: 850fr 1245fr;
      gap: 12px;
      margin-top: 15px;
    }
    .col {
      display: flex;
      flex-direction: column;
      gap: 14px;
      min-width: 0;
    }
    .right {
      gap: 17px;
    }
    .right quality-location {
      width: 49%;
    }
    .cursor {
      position: absolute;
      left: 998px;
      top: 1157px;
      width: 25px;
      height: 40px;
      fill: #fff;
      stroke: #111;
      stroke-width: 2px;
    }
  `;

  render() {
    const kpi = [
      ["183252", "Total Parts"],
      ["154654", "ok"],
      ["28598", "nok"],
      ["15,61 %", "%nok"],
    ];
    const tools: [string, unknown, boolean][] = [
      ["Drill up", svg`<path d="M14 27V2M1 14 14 2l13 12" />`, false],
      ["Drill down", svg`<path d="M14 1v25M1 14l13 12 13-12" />`, false],
      ["Next level", svg`<path d="M7 1v25M2 20l5 6 5-6M21 1v25M16 20l5 6 5-6" />`, true],
      ["Expand all", svg`<path d="M14 1v12M6 26V13h16v13M2 21l4 5 4-5M18 21l4 5 4-5" />`, true],
      ["Filters", funnel, false],
      ["Focus mode", focus, false],
    ];
    return html`
      <kap-logo class="mark" tone="ghost" io></kap-logo>
      <div class="kpis">
        <div class="box">
          <dl class="numbers">${kpi.map(([v, l]) => html`<div><dt>${l}</dt><dd>${v}</dd></div>`)}</dl>
          <div class="tools">
            ${tools.map(
              ([l, p, dim]) => html`<button aria-label=${l} class=${classMap({ dim })}><svg viewBox="0 0 28 28">${p}</svg></button>`,
            )}
          </div>
        </div>
        <div class="box date">03/03/2020 09:23:38</div>
        <div class="box logo"><kap-logo io></kap-logo></div>
      </div>
      <div class="panels">
        <div class="col">
          <location-table></location-table>
          <location-map></location-map>
        </div>
        <div class="col right">
          <quality-index></quality-index>
          <quality-location></quality-location>
        </div>
      </div>
      <svg class="cursor" viewBox="0 0 25 40"><path d="M1 1V35L9 28 14 39 20 36 15 25 24 25Z" /></svg>
    `;
  }
}

/* ---------- Column chart with value labels ---------- */

interface Column {
  name: string;
  value: number;
  color: string;
  inside?: boolean;
}

@customElement("column-chart")
export class ColumnChart extends LitElement {
  @property() heading = "";
  @property({ attribute: false }) ticks: number[] = [];
  @property({ attribute: false }) data: Column[] = [];

  static styles = [
    panelStyles,
    css`
      :host {
        display: flex;
        --fill: 76%;
        --axis: 16px;
        --inset: 64px;
        --name: #666;
        --end: 48px;
      }
      :host([dense]) {
        --fill: 92%;
        --axis: 22px;
        --inset: 57px;
        --name: #1b9fe6;
        --end: 30px;
      }
      .panel {
        flex: 1;
        color: #6f6f6f;
        font-size: 11px;
      }
      .title {
        font-size: 17px;
        line-height: 22px;
      }
      .plot {
        flex: 1;
        display: grid;
        margin: 11px 3px 0;
        min-height: 0;
      }
      .scale,
      .cols {
        grid-area: 1 / 1;
        min-height: 0;
      }
      .scale {
        display: flex;
        flex-direction: column;
        justify-content: space-between;
      }
      .tick {
        display: flex;
        align-items: center;
        gap: 9px;
        height: 0;
      }
      .tick span {
        width: var(--axis);
        text-align: right;
      }
      .tick i {
        flex: 1;
        height: 1px;
        background: #e8e8e8;
      }
      .cols,
      .names {
        display: grid;
        grid-auto-flow: column;
        grid-auto-columns: minmax(0, 1fr);
        padding: 0 var(--end) 0 var(--inset);
      }
      .slot {
        display: flex;
        flex-direction: column;
        justify-content: flex-end;
        align-items: center;
        min-height: 0;
      }
      .value {
        font-family: Roboto, sans-serif;
        font-size: 11px;
        line-height: 20px;
      }
      .bar {
        width: var(--fill);
        flex: none;
        text-align: center;
        color: #fff;
        font: 700 11px/26px Roboto, sans-serif;
      }
      .names {
        margin: 1px 3px 0;
        height: 24px;
        color: var(--name);
        text-align: center;
        font-size: 10px;
        line-height: 18px;
        white-space: nowrap;
      }
      :host([dense]) .names {
        font-family: "Liberation Sans", Arial, sans-serif;
      }
    `,
  ];

  render() {
    const max = this.ticks[0];
    return html`<section class="panel">
      <h2 class="title">${this.heading}</h2>
      <div class="plot">
        <div class="scale">${this.ticks.map((t) => html`<div class="tick"><span>${t}</span><i></i></div>`)}</div>
        <div class="cols">
          ${this.data.map(
            (c) => html`<div class="slot">
              ${c.inside ? nothing : html`<span class="value">${c.value}</span>`}
              <div class="bar" style="height:${((c.value / max) * 100).toFixed(1)}%;background:${c.color}">${c.inside ? c.value : nothing}</div>
            </div>`,
          )}
        </div>
      </div>
      <div class="names">${this.data.map((c) => html`<span>${c.name}</span>`)}</div>
    </section>`;
  }
}

/* ---------- Control page ---------- */

const REFS: [string, number, number, number, string][] = [
  ["JB218S19E02", 76, 44, 120, "sel red"],
  ["JB331S49E04", 69, 43, 112, "red"],
  ["JB332S49E04", 63, 39, 102, "red"],
  ["JB328S29AG17", 80, 37, 117, "red"],
  ["JB328S39E04", 81, 29, 110, "brown"],
  ["JB507U29E03", 160, 29, 189, "sel brown"],
  ["JB327S39AG17", 91, 28, 119, "brown"],
  ["JB508U29E03", 187, 28, 215, "brown"],
  ["JB407S49AG17", 86, 25, 111, "brown"],
  ["JB337S09E01", 79, 24, 103, "brown"],
  ["JB328U09AG17", 67, 21, 88, "olive"],
  ["JB409X09E03", 35, 21, 56, "olive"],
  ["JB507S39E03", 115, 21, 138, "olive"],
  ["JB327S29AG17", 90, 20, 110, "olive"],
  ["JB327S49AG17", 85, 20, 105, "olive"],
  ["JB327U09AG17", 63, 20, 83, "olive"],
  ["JB408S49E05", 87, 18, 105, "olive"],
  ["JB237X09E03", 17, 17, 34, "olive"],
];

@customElement("control-page")
export class ControlPage extends LitElement {
  static styles = [
    panelStyles,
    css`
      :host {
        flex: 1;
        min-width: 0;
        position: relative;
        isolation: isolate;
        display: grid;
        grid-template-columns: 310fr 328fr 560fr;
        grid-template-rows: 78px minmax(0, 1fr);
        gap: 6px 8px;
        box-sizing: border-box;
        margin: 0 68px 0 69px;
        padding: 16px 9px 6px 11px;
        background: #fff;
        font-family: "Open Sans", "Noto Sans", sans-serif;
        color: #252525;
      }
      .mark {
        position: absolute;
        z-index: -1;
        left: 6.9%;
        top: 232px;
        width: 85.8%;
      }
      .panel {
        border-width: 1px;
        outline: 1px solid rgba(80, 80, 80, 0.35);
        outline-offset: -2px;
      }
      .slicer {
        padding: 10px 12px;
        gap: 6px;
        background: #fff;
      }
      .dates {
        display: flex;
        gap: 6px;
      }
      .dates input {
        box-sizing: border-box;
        width: 71px;
        height: 24px;
        padding: 0;
        border: 1px solid #ececec;
        background: #fff;
        color: #333;
        font: 11px "Open Sans", sans-serif;
        text-align: center;
      }
      .range {
        display: grid;
        align-items: center;
      }
      .range input {
        grid-area: 1 / 1;
        appearance: none;
        width: 100%;
        height: 26px;
        margin: 0;
        background: none;
        pointer-events: none;
      }
      .range input:first-child {
        background: linear-gradient(#666, #666) center / calc(100% - 24px) 3px no-repeat;
      }
      .range input::-webkit-slider-thumb {
        appearance: none;
        box-sizing: border-box;
        width: 25px;
        height: 25px;
        border: 2px solid #606060;
        border-radius: 50%;
        background: #fff;
        pointer-events: auto;
      }
      .top {
        grid-column: 2 / 4;
        display: grid;
        grid-template-columns: minmax(0, 705fr) minmax(0, 191fr);
      }
      .banner {
        position: relative;
        display: grid;
        justify-content: center;
        background: #cbe3f8;
      }
      .banner h1 {
        margin: 0;
        color: #111;
        font-size: 36px;
        font-weight: 400;
        line-height: 68px;
      }
      .tools {
        position: absolute;
        left: 39%;
        bottom: -2px;
        display: flex;
        gap: 14px;
      }
      .tools svg {
        width: 16px;
        height: 16px;
        fill: none;
        stroke: #9fb0d4;
        stroke-width: 2px;
      }
      .brand {
        display: flex;
        align-items: center;
        padding: 0 0 8px 18px;
      }
      .brand kap-logo {
        width: 161px;
      }
      .left,
      .charts {
        display: flex;
        flex-direction: column;
        gap: 6px;
        min-height: 0;
      }
      .charts {
        gap: 10px;
      }
      .customers {
        flex: 370;
        padding: 4px 12px 4px 5px;
      }
      .shift {
        flex: 218;
      }
      .title {
        font-size: 17px;
        line-height: 24px;
      }
      table {
        width: 100%;
        table-layout: fixed;
        border-collapse: collapse;
        font-size: 12px;
        text-align: center;
      }
      th,
      td {
        box-sizing: border-box;
        padding: 0;
        font-weight: 400;
      }
      thead th {
        height: 46px;
        padding-bottom: 8px;
        background: #99c8f1;
        border-right: 1px solid #7faed8;
        border-bottom: 1px solid #5a7a99;
        font-size: 16px;
      }
      thead th:last-child,
      tfoot td:last-child {
        border-right: 0;
      }
      .sorted {
        position: relative;
      }
      .sorted::after {
        content: "";
        position: absolute;
        left: 6px;
        bottom: 8px;
        border: 6px solid transparent;
        border-top-color: #111;
        border-bottom: 0;
      }
      .l {
        text-align: left;
        padding-left: 5px;
      }
      .customers td {
        height: 30px;
      }
      .customers tfoot td {
        height: 28px;
        background: #99c8f1;
        border-right: 1px solid #7faed8;
        border-top: 1px solid #5a7a99;
        font-weight: 700;
      }
      .c1 {
        width: 30%;
      }
      .c2 {
        width: 46%;
      }
      .hot {
        background: #b83234;
      }
      .good {
        background: #41963f;
      }
      .refs {
        display: grid;
        grid-template-columns: minmax(0, 1fr) 8px;
        gap: 14px;
        padding: 4px 5px 3px 6px;
      }
      .refs table {
        height: 100%;
        font-size: 13px;
      }
      .refs tbody {
        color: #bcbcc2;
      }
      .refs .r1 {
        width: 34%;
      }
      .refs .r2 {
        width: 23%;
      }
      .refs .sel {
        color: #1d2433;
      }
      .refs tfoot td {
        height: 29px;
        background: #e0eefa;
        color: #adb1b6;
        font-weight: 600;
        border-right: 1px solid #d0e2f2;
      }
      .red .nok {
        background: rgba(184, 50, 52, 0.27);
      }
      .brown .nok {
        background: rgba(143, 84, 54, 0.3);
      }
      .olive .nok {
        background: rgba(115, 103, 54, 0.3);
      }
      .sel.red .nok {
        background: #b83234;
      }
      .sel.brown .nok {
        background: #8f5436;
      }
      .bar {
        display: flex;
        flex-direction: column;
        align-items: center;
        background: #f0f0f0;
      }
      .bar svg {
        width: 8px;
        height: 8px;
        margin: 9px 0 10px;
        fill: none;
        stroke: #444;
        stroke-width: 1px;
      }
      .bar i {
        width: 8px;
        height: 25px;
        margin-bottom: auto;
        background: #c9c9c9;
      }
      .donut {
        flex: 1;
        min-height: 0;
        width: 100%;
      }
      .donut text {
        font-size: 10px;
        fill: #777;
      }
      .donut circle {
        fill: none;
        stroke-width: 28px;
      }
      .donut path {
        fill: none;
        stroke: #bbb;
      }
      .operations {
        flex: 289;
        min-height: 0;
      }
      .defects {
        flex: 304;
        min-height: 0;
      }
    `,
  ];

  private readonly operations: Column[] = [
    { name: "Operation 2", value: 44, color: "#3492e0" },
    { name: "Operation 1", value: 24, color: "#3492e0" },
    { name: "Operation 7", value: 5, color: "#3492e0" },
  ];

  private readonly defects: Column[] = [
    { name: "Defect-Intro", value: 148, color: "#40953f", inside: true },
    { name: "Defect-Contr", value: 88, color: "#f5d33c" },
    { name: "Defect-E2", value: 42, color: "#a0cb9f" },
    { name: "Defect-T2", value: 42, color: "#a0cb9f" },
    { name: "Defect-HT2", value: 38, color: "#a0cb9f" },
    { name: "Defect-TPr2", value: 38, color: "#a0cb9f" },
  ];

  private slice(part: number, before: number, color: string) {
    return svg`<circle cx="155" cy="96" r="56" pathLength="309" stroke=${color}
      stroke-dasharray="${part} 309" stroke-dashoffset=${-before} transform="rotate(-90 155 96)" />`;
  }

  render() {
    return html`
      <kap-logo class="mark" tone="ghost" io></kap-logo>
      <section class="panel slicer">
        <div class="dates">
          <input type="text" aria-label="From date" value="01/01/2019" />
          <input type="text" aria-label="To date" value="03/03/2020" />
        </div>
        <div class="range">
          <input type="range" aria-label="Range start" value="0" />
          <input type="range" aria-label="Range end" value="100" />
        </div>
      </section>
      <div class="top">
        <div class="banner">
          <h1>CONTROL</h1>
          <div class="tools"><svg viewBox="0 0 28 28">${funnel}</svg><svg viewBox="0 0 28 28">${focus}</svg></div>
        </div>
        <div class="brand"><kap-logo io></kap-logo></div>
      </div>
      <div class="left">
        <section class="panel customers">
          <table>
            <colgroup><col class="c1" /><col class="c2" /><col /></colgroup>
            <thead>
              <tr><th>Customer</th><th>Project</th><th class="sorted">NOK</th></tr>
            </thead>
            <tbody>
              <tr><td class="l">Customer 3</td><td class="l">Project 2</td><td class="hot">44</td></tr>
              <tr><td class="l">Customer 3</td><td class="l">Project 4</td><td class="good">29</td></tr>
            </tbody>
            <tfoot>
              <tr><td class="l">Total</td><td></td><td>73</td></tr>
            </tfoot>
          </table>
        </section>
        <section class="panel shift">
          <h2 class="title">N. Controls by Shift</h2>
          <svg class="donut" viewBox="0 0 310 192">
            ${this.slice(134, 0, "#6aaee8")} ${this.slice(97, 134, "#99c8f1")} ${this.slice(78, 231, "#3492e0")}
            <path d="M201 41 205 36H216M86 41H99L104 46M101 162H112L117 157" />
            <text x="220" y="40">Morning 134</text>
            <text x="83" y="46" text-anchor="end">Night 78</text>
            <text x="97" y="166" text-anchor="end">Evening 97</text>
          </svg>
        </section>
      </div>
      <section class="panel refs">
        <table>
          <colgroup><col class="r1" /><col class="r2" /><col class="r2" /><col /></colgroup>
          <thead>
            <tr><th>Reference</th><th>OK</th><th class="sorted">NOK</th><th>Total</th></tr>
          </thead>
          <tbody>
            ${REFS.map(
              ([ref, ok, nok, total, cls]) => html`<tr class=${cls}>
                <td class="l">${ref}</td>
                <td>${ok}</td>
                <td class="nok">${nok}</td>
                <td>${total}</td>
              </tr>`,
            )}
          </tbody>
          <tfoot>
            <tr><td class="l">Total</td><td>20733</td><td>1286</td><td>22122</td></tr>
          </tfoot>
        </table>
        <div class="bar">
          <svg viewBox="0 0 8 8"><path d="m1 6 3-4 3 4" /></svg>
          <i></i>
          <svg viewBox="0 0 8 8"><path d="m1 2 3 4 3-4" /></svg>
        </div>
      </section>
      <div class="charts">
        <column-chart class="operations" heading="N. NOK by Operation" .ticks=${[50, 40, 30, 20, 10, 0]} .data=${this.operations}></column-chart>
        <column-chart class="defects" dense heading="TOP Defects" .ticks=${[150, 100, 50, 0]} .data=${this.defects}></column-chart>
      </div>
    `;
  }
}

/* ---------- Desktop with both windows ---------- */

@customElement("app-root")
export class AppRoot extends LitElement {
  static styles = css`
    :host {
      display: block;
      background: #fff;
    }
    .desktop {
      position: relative;
      display: flex;
      min-height: 100vh;
      overflow: hidden;
    }
    .back {
      display: flex;
      width: 77.57%;
    }
    .back kap-window {
      flex: 1;
    }
    .scroll {
      display: flex;
      flex-direction: column;
      width: 17px;
      margin-left: 4px;
      background: #f0f0f0;
    }
    .scroll svg {
      width: 17px;
      height: 22px;
      fill: #444;
    }
    .thumb {
      height: 560px;
      margin: 272px 0 auto;
      background: #c1c1c1;
    }
    .front {
      position: absolute;
      right: 0;
      top: 539px;
      width: 44.57%;
      height: 781px;
    }
    .support {
      position: absolute;
      right: 0;
      top: 1034px;
      width: 38px;
      height: 94px;
      padding: 0;
      border: 0;
      border-radius: 5px 0 0 5px;
      box-shadow: 0 0 4px rgba(90, 120, 190, 0.5);
      background: #64b7de;
      color: #14202c;
      font: 700 15px "Open Sans", sans-serif;
    }
    .support span {
      writing-mode: vertical-rl;
      rotate: 180deg;
    }
  `;

  render() {
    return html`<div class="desktop">
      <div class="back">
        <kap-window><quality-page></quality-page></kap-window>
        <div class="scroll">
          <svg viewBox="0 0 17 22"><path d="M6 22 12 14 18 22Z" /></svg>
          <div class="thumb"></div>
          <svg viewBox="0 0 17 22"><path d="M6 0 12 7 18 0Z" /></svg>
        </div>
      </div>
      <kap-window class="front" compact><control-page></control-page></kap-window>
      <button class="support"><span>Support</span></button>
    </div>`;
  }
}
